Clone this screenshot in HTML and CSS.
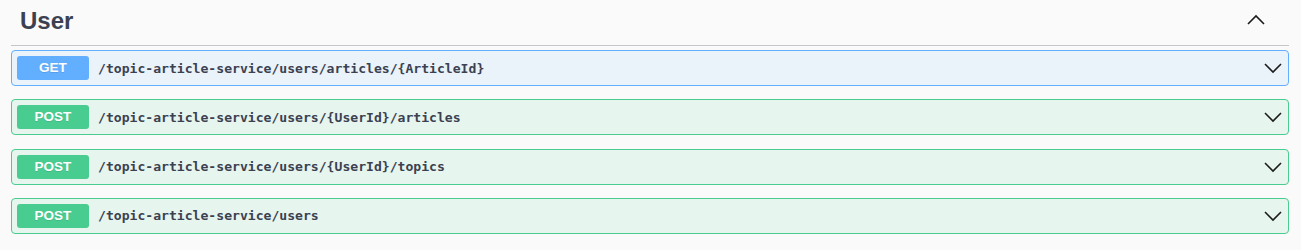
FILE: index.html
```html
<!DOCTYPE html>
<html lang="en">
<head>
    <meta charset="UTF-8">
    <meta name="viewport" content="width=device-width, initial-scale=1.0">
    <title>User</title>
    <link rel="stylesheet" href="styles.css">
</head>
<body>

    <div class="tag-section">
        <div class="tag-header">
            <h3 class="tag-title">User</h3>
            <svg class="arrow arrow-up" width="20" height="20" viewBox="0 0 20 20">
                <path d="M2 14 L10 6 L18 14" />
            </svg>
        </div>

        <div class="opblock get">
            <span class="method">GET</span>
            <span class="path">/topic-article-service/users/articles/{ArticleId}</span>
            <svg class="arrow" width="20" height="20" viewBox="0 0 20 20">
                <path d="M2 6 L10 14 L18 6" />
            </svg>
        </div>

        <div class="opblock post">
            <span class="method">POST</span>
            <span class="path">/topic-article-service/users/{UserId}/articles</span>
            <svg class="arrow" width="20" height="20" viewBox="0 0 20 20">
                <path d="M2 6 L10 14 L18 6" />
            </svg>
        </div>

        <div class="opblock post">
            <span class="method">POST</span>
            <span class="path">/topic-article-service/users/{UserId}/topics</span>
            <svg class="arrow" width="20" height="20" viewBox="0 0 20 20">
                <path d="M2 6 L10 14 L18 6" />
            </svg>
        </div>

        <div class="opblock post">
            <span class="method">POST</span>
            <span class="path">/topic-article-service/users</span>
            <svg class="arrow" width="20" height="20" viewBox="0 0 20 20">
                <path d="M2 6 L10 14 L18 6" />
            </svg>
        </div>
    </div>

</body>
</html>
```

FILE: styles.css
```css
body {
    margin: 0;
    background-color: #fafafa;
    font-family: "Liberation Sans", Arial, sans-serif;
    color: #3b4151;
}
.tag-section {
    margin: 0 12px 0 11px;
}
.tag-header {
    display: flex;
    align-items: center;
    padding: 7px 23px 10px 9px;
    border-bottom: 1px solid #c4c6ca;
    margin-bottom: 4px;
}
.tag-title {
    flex: 1;
    margin: 0;
    font-size: 24px;
    line-height: 28px;
    font-weight: bold;
}
.arrow {
    flex: none;
    fill: none;
    stroke: #1b1b1b;
    stroke-width: 1.6;
}
.arrow-up {
    margin-top: -2px;
}
.opblock {
    display: flex;
    align-items: center;
    padding: 5px;
    border: 1px solid;
    border-radius: 4px;
    margin-bottom: 13.3px;
}
.opblock.get {
    border-color: #61affe;
    background-color: rgba(97, 175, 254, 0.1);
}
.opblock.post {
    border-color: #49cc90;
    background-color: rgba(73, 204, 144, 0.1);
}
.method {
    width: 72px;
    height: 24px;
    line-height: 24px;
    text-align: center;
    border-radius: 3px;
    color: #fff;
    font-size: 13.5px;
    font-weight: bold;
    text-shadow: 0 1px 0 rgba(0, 0, 0, 0.1);
}
.get .method {
    background-color: #61affe;
}
.post .method {
    background-color: #49cc90;
}
.path {
    flex: 1;
    padding: 0 9px;
    font-family: "DejaVu Sans Mono", "Liberation Mono", monospace;
    font-size: 13.1px;
    font-weight: bold;
    color: #3b4151;
}
```
